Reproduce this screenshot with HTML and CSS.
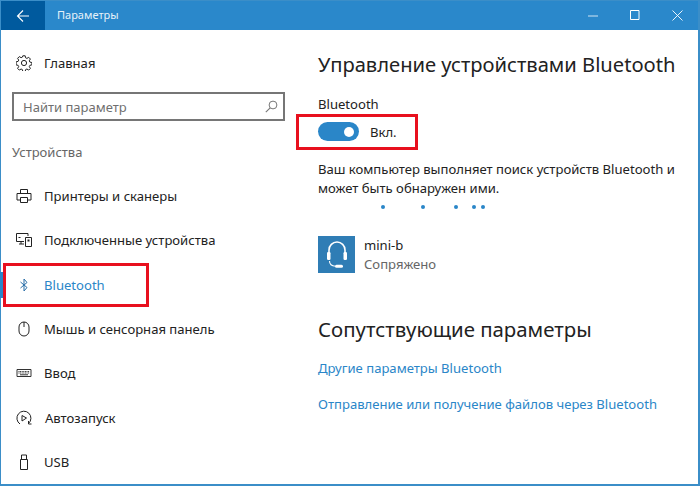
FILE: index.html
```html
<!DOCTYPE html>
<html lang="ru">
<head>
<meta charset="utf-8">
<title>Параметры</title>
<link rel="stylesheet" href="styles.css">
</head>
<body>
<div class="window">
  <header class="titlebar">
    <div class="back">
      <svg width="14" height="14" viewBox="0 0 14 14"><path d="M13 7H1.500M7 1.500 1.500 7 7 12.500" fill="none" stroke="#fff" stroke-width="1.100"/></svg>
    </div>
    <div class="title">Параметры</div>
    <div class="controls">
      <svg width="10" height="2" viewBox="0 0 10 2"><path d="M0 1h10" stroke="#cfe4f3" stroke-width="1"/></svg>
      <svg width="10" height="11" viewBox="0 0 10 11"><path d="M.5.5h8.500v9H.5z" fill="none" stroke="#fff" stroke-width="1"/></svg>
      <svg width="11" height="11" viewBox="0 0 11 11"><path d="M.5.5l10 10M10.500.5l-10 10" stroke="#fff" stroke-width=".9"/></svg>
    </div>
  </header>
  <div class="content">
    <aside class="sidebar">
      <div class="home">
        <svg class="icon" width="16" height="16" viewBox="0 0 16 16"><g fill="none" stroke="#222" stroke-width="1"><circle cx="8" cy="8" r="2.600"/><path d="M6.800.8h2.400l.4 2 1.300.6 1.800-1.100 1.700 1.700-1.100 1.800.6 1.300 2 .4v2.400l-2 .4-.6 1.300 1.100 1.800-1.700 1.700-1.800-1.100-1.300.6-.4 2H6.800l-.4-2-1.300-.6-1.800 1.100-1.700-1.700 1.100-1.800-.6-1.300-2-.4V6.800l2-.4.600-1.300L1.600 3.300 3.300 1.600l1.800 1.100 1.300-.6z"/></g></svg>
        <span>Главная</span>
      </div>
      <div class="search">
        <span>Найти параметр</span>
        <svg width="13" height="13" viewBox="0 0 13 13"><circle cx="8" cy="5" r="3.900" fill="none" stroke="#777"/><path d="M5.200 7.800.8 12.200" stroke="#777" stroke-width="1.100"/></svg>
      </div>
      <div class="group">Устройства</div>
      <nav class="nav">
        <div class="item">
          <svg class="icon" width="16" height="16" viewBox="0 0 16 16"><g fill="none" stroke="#222"><path d="M4.500 5V1.500h7V5M4.500 12H1V5.500h14V12h-3.500"/><path d="M4.500 9.500h7v5h-7z"/></g></svg>
          <span>Принтеры и сканеры</span>
        </div>
        <div class="item">
          <svg class="icon" width="16" height="16" viewBox="0 0 16 16"><g fill="none" stroke="#222"><path d="M8 9.500H.5v-8h11.500V4M3 12h5M5 9.500V12"/><path d="M9.500 5.500h6v9h-6z"/></g><path d="M11.500 7.500h2v2h-2zM2.500 5h2v1h-2z" fill="#222"/></svg>
          <span>Подключенные устройства</span>
        </div>
        <div class="item active">
          <svg class="icon" width="16" height="16" viewBox="0 0 16 16"><path d="M4.500 5 11 10.500 8 14V2l3 3.500L4.500 11" fill="none" stroke="#2a6fa8" stroke-width="1"/></svg>
          <span>Bluetooth</span>
        </div>
        <div class="item">
          <svg class="icon" width="16" height="16" viewBox="0 0 16 16"><g fill="none" stroke="#222"><rect x="3" y="1" width="10" height="14" rx="5"/><path d="M8 1v5"/></g></svg>
          <span>Мышь и сенсорная панель</span>
        </div>
        <div class="item">
          <svg class="icon" width="16" height="16" viewBox="0 0 16 16"><path d="M1 4.500h14v7H1z" fill="#fff" stroke="#333"/><path d="M2.500 6.500h11M2.500 8h11" stroke="#333" stroke-dasharray="1 .6"/><path d="M4 9.800h8" stroke="#333"/></svg>
          <span>Ввод</span>
        </div>
        <div class="item autoplay">
          <svg class="icon" width="16" height="16" viewBox="0 0 16 16"><g fill="none" stroke="#222"><path d="M4 14A7 7 0 1 1 12.500 13.500"/><path d="M6 5.500v5.500L10.500 8z"/><path d="M12.500 11v3h3"/></g></svg>
          <span>Автозапуск</span>
        </div>
        <div class="item">
          <svg class="icon" width="16" height="16" viewBox="0 0 16 16"><g fill="none" stroke="#222"><path d="M4.500 5.500h7v10h-7zM5.500 5.500V1h5v4.500"/></g></svg>
          <span>USB</span>
        </div>
      </nav>
    </aside>
    <main class="main">
      <h1 class="heading">Управление устройствами Bluetooth</h1>
      <div class="label">Bluetooth</div>
      <div class="toggle-row">
        <div class="toggle"><div class="knob"></div></div>
        <span>Вкл.</span>
      </div>
      <p class="desc">Ваш компьютер выполняет поиск устройств Bluetooth и<br>может быть обнаружен ими.</p>
      <div class="dots"><i class="dot d1"></i><i class="dot d2"></i><i class="dot d3"></i><i class="dot d4"></i><i class="dot d5"></i></div>
      <div class="device">
        <div class="tile">
          <svg width="22" height="28" viewBox="0 0 22 28"><g fill="none" stroke="#fff"><path d="M3 14V9a8 8 0 0 1 16 0v5" stroke-width="1.600"/><path d="M3.500 20c0 3.500 2 5 6 5.200" stroke-width="1.100"/></g><rect x="1" y="11" width="3.500" height="8" rx="1.200" fill="#fff"/><rect x="17.500" y="11" width="3.500" height="8" rx="1.200" fill="#fff"/><rect x="9" y="23.800" width="8" height="3" rx="1.500" fill="#fff"/></svg>
        </div>
        <div class="device-text">
          <div class="device-name">mini-b</div>
          <div class="device-state">Сопряжено</div>
        </div>
      </div>
      <h2 class="heading related">Сопутствующие параметры</h2>
      <a class="link first">Другие параметры Bluetooth</a>
      <a class="link second">Отправление или получение файлов через Bluetooth</a>
    </main>
  </div>
  <div class="mark mark-nav"></div>
  <div class="mark mark-toggle"></div>
</div>
</body>
</html>
```
FILE: styles.css
```css
* { box-sizing: border-box; }
html, body { margin: 0; padding: 0; }
body { width: 700px; height: 486px; overflow: hidden; background: #fff; font-family: "Noto Sans", "Open Sans", sans-serif; font-size: 13.080px; color: #222; }
.window { position: relative; width: 700px; height: 486px; display: flex; flex-direction: column; border: 1px solid #3b8ec8; border-right-width: 2px; border-bottom-width: 2px; border-top: 0; }
.titlebar { height: 30px; flex: none; display: flex; align-items: center; background: #2a88cb; color: #fff; border-top: 1px solid #3b8ec8; }
.back { width: 44px; height: 29px; background: #005a9e; display: flex; align-items: center; justify-content: center; }
.title { margin-left: 12px; padding-bottom: 2px; font-size: 11px; color: #e6f1f9; }
.controls { margin-left: auto; display: flex; align-items: center; gap: 32px; padding-right: 15px; }
.content { flex: 1; display: flex; min-height: 0; }
.sidebar { width: 299px; flex: none; padding-top: 21px; }
.home, .item { display: flex; align-items: center; gap: 12px; padding-left: 15px; }
.home { height: 24px; }
.search { width: 273px; height: 29px; margin: 17px 0 0 11px; border: 2px solid #767676; display: flex; align-items: center; justify-content: space-between; padding: 0 5px 0 9px; color: #6f6f6f; font-size: 13px; }
.group { margin: 21px 0 0 11px; height: 20px; line-height: 20px; color: #666; font-size: 13px; }
.nav { margin-top: 12px; }
.item { height: 44.300px; }
.icon { flex: none; }
.active { color: #2a86c8; position: relative; }
.active::before { content: ""; position: absolute; left: -1px; top: 9px; width: 4px; height: 26px; background: #2a86c8; }
.autoplay span { margin-left: 1px; }
.main { flex: 1; padding: 21px 0 0 18px; }
.heading { margin: 0; font-size: 20.150px; font-weight: 400; line-height: 26px; color: #222; }
.label { margin-top: 18px; height: 18px; line-height: 18px; }
.toggle-row { margin-top: 8px; height: 21px; display: flex; align-items: center; gap: 11px; }
.toggle { width: 41px; height: 19px; border-radius: 10px; background: #2a86c8; position: relative; }
.knob { position: absolute; left: 26px; top: 4.500px; width: 10px; height: 10px; border-radius: 50%; background: #fff; }
.desc { margin: 18px 0 0; line-height: 19px; }
.dots { position: relative; height: 4px; margin-top: 7px; }
.dot { position: absolute; top: 0; width: 4px; height: 4px; border-radius: 50%; background: #2a86c8; }
.d1 { left: 63px; } .d2 { left: 103px; } .d3 { left: 136px; } .d4 { left: 154px; } .d5 { left: 163px; }
.device { display: flex; gap: 9px; margin-top: 27px; }
.tile { width: 37px; height: 37px; background: #2f7db5; display: flex; align-items: center; justify-content: center; }
.device-name { line-height: 19px; }
.device-state { line-height: 19px; color: #666; }
.heading.related { margin-top: 42px; font-size: 20.400px; }
.link { display: block; color: #2a86c8; line-height: 18px; }
.first { margin-top: 17px; }
.second { margin-top: 18px; }
.mark { position: absolute; border: 3px solid #e8101e; }
.mark-nav { left: 2px; top: 263px; width: 146px; height: 44px; }
.mark-toggle { left: 295px; top: 114px; width: 122px; height: 36px; }
```
